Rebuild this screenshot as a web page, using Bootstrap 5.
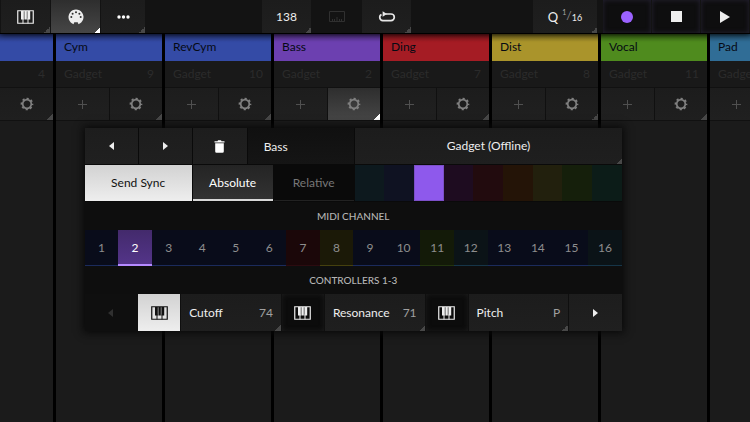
<!DOCTYPE html>
<html lang="en" data-bs-theme="dark">
<head>
<meta charset="utf-8">
<meta name="viewport" content="width=device-width, initial-scale=1">
<title>Mixer</title>
<link href="https://cdn.jsdelivr.net/npm/bootstrap@5.3.0/dist/css/bootstrap.min.css" rel="stylesheet">
<style>
:root { --fold: #484848; }
body { background: #000; color: #eee; font-family: "Lato", "Liberation Sans", sans-serif; font-size: 12px; line-height: 16px; }
.btn { --bs-btn-font-size: 12px; --bs-btn-line-height: 16px; --bs-btn-padding-x: 0; --bs-btn-padding-y: 0; --bs-btn-border-width: 0px; --bs-btn-border-radius: 0; --bs-btn-color: #eee; --bs-btn-hover-color: #fff; display: flex; align-items: center; justify-content: center; min-width: 0; }
.btn:disabled { opacity: 1; color: #303030; }
svg { display: block; flex: none; }

/* Surfaces */
.pad { background: linear-gradient(#1d1d1d, #202020); }
.fold { background: linear-gradient(135deg, transparent 50%, var(--fold) 50%) right bottom / 6px 6px no-repeat, linear-gradient(#1c1c1c, #1f1f1f); }
.fold.lit { --fold: #fff; background: linear-gradient(135deg, transparent 50%, var(--fold) 50%) right bottom / 6px 6px no-repeat, linear-gradient(#2e2e2e, #464646); }
.white-pad { background: linear-gradient(#d2d2d2, #eee); --bs-btn-color: #111; --bs-btn-hover-color: #000; }
.well { background: #0c0c0c; box-shadow: inset 0 0 5px #1c1c1c; }

/* Toolbar */
.toolbar { height: 33px; background: #131313; padding-left: 1px; padding-right: 1px; box-shadow: 0 1px 6px #000; }
.tools { gap: 1px; }
.tool { width: 49px; height: 100%; }
.tool-narrow { width: 44px; }
.tool-wide { width: 64px; }
.tempo { font-size: 12px; }
.middle { margin-right: 5px; }
.transport { margin-left: 6px; gap: 1px; }
.transport .btn { width: 48px; box-shadow: inset 0 0 5px #262232; background: #0e0e0f; }
.quant { font-size: 13px; }
.fraction { font-size: 9px; margin-left: 4px; }
.fraction sup { font-size: 7px; top: -5px; color: #aaa; }
.fraction span { color: #888; font-size: 12px; }
.fraction sub { font-size: 9px; bottom: -1px; }

/* Tracks */
.tracks { gap: 3px; margin-top: 1px; }
.track { width: 106px; background: linear-gradient(#181818, #1b1b1b 60px); }
.track.clipped { width: 53px; }
.track-name { height: 27px; padding: 5px 8px; color: #060a14; background: linear-gradient(rgba(0,0,0,.35), transparent 8px), var(--hue); }
.track-device { height: 27px; padding: 5px 8px; color: #2b2b2b; background: #191919; border-bottom: 1px solid #111; }
.track-keys { height: 33px; gap: 1px; border-bottom: 1px solid #111; background: #101010; }
.track-keys .btn { color: #808080; }
.track-keys .plus { color: #505050; }
.blue { --hue: #344ba6; } .violet { --hue: #6c40b0; } .red { --hue: #a51c24; } .gold { --hue: #aa942b; } .green { --hue: #4f8b1e; } .teal { --hue: #306d96; }

/* Device panel */
.panel { left: 11.3%; width: 71.6%; top: 128px; background: #0e0e0e; box-shadow: 0 0 8px 2px #090909; }
.line { height: 37px; display: grid; gap: 1px; background: #0a0a0a; }
.line-device { grid-template-columns: repeat(3, 10fr) 20fr 50fr; }
.line-sync { grid-template-columns: 20fr 15fr 15fr 50fr; padding-bottom: 1px; }
.line-channels { height: 36px; grid-template-columns: repeat(16, 1fr); gap: 0; }
.line-controls { grid-template-columns: 10fr repeat(3, 8fr 19fr) 10fr; background: #0f0f0f; }
.line-device > * { margin-bottom: 1px; }
.title-field { min-width: 0; border: 0; padding: 1px 16px 0; color: #eee; background: linear-gradient(#101010, #151515); border-radius: 0; font-size: 12px; }
.caption { height: 28px; font-size: 10px; line-height: 28px; color: #b4b4b4; text-align: center; margin: 0; }
.mode { color: #777; background: #0a0a0a; box-shadow: inset 0 -1px #222; }
.btn-check:checked + .mode { color: #fff; background: linear-gradient(#242424, #333); box-shadow: inset 0 -2px #d8d8d8; }
.swatches { display: grid; grid-template-columns: repeat(9, 1fr); }
.swatch { background: var(--dim); }
.btn-check:checked + .swatch { background: #8e59ec; box-shadow: inset 0 0 0 1px #7c50c8; }
.channel { color: #8e8e8e; background: var(--dim); box-shadow: inset 0 -1px var(--edge); }
.btn-check:checked + .channel { color: #fff; background: linear-gradient(#432a6c, #54358a); box-shadow: inset 0 -2px #b58aff; }
.c-blue { --dim: #090c1a; --edge: #1b2b5c; } .c-red { --dim: #1b0709; --edge: #2c0b10; } .c-olive { --dim: #1b1907; --edge: #45400e; } .c-green { --dim: #131a08; --edge: #22340f; } .c-cyan { --dim: #0b1317; --edge: #163548; }
.s-cyan { --dim: #0d191e; } .s-navy { --dim: #0f1222; } .s-violet { --dim: #8e59ec; } .s-plum { --dim: #1e0c20; } .s-red { --dim: #220b0e; } .s-brown { --dim: #241407; } .s-olive { --dim: #22200d; } .s-green { --dim: #151f0b; } .s-teal { --dim: #0c1c18; }
.control { justify-content: space-between; padding: 0 8px; }
.control .amount { color: #a0a0a0; }
</style>
</head>
<body class="vh-100 d-flex flex-column overflow-hidden position-relative">
<svg width="0" height="0" class="position-absolute" aria-hidden="true">
  <symbol id="keys" viewBox="0 0 17 14"><path d="M.75.75h15.5v12.5H.75z" fill="none" stroke="currentColor" stroke-width="1.2"/><path d="M6 8.5v5M11 8.5v5" stroke="currentColor" stroke-width="1"/><path d="M4 1h2.8v8.5H4zM7.4 1h2.4v8.5H7.4zM10.4 1h2.8v8.5h-2.8z" fill="currentColor"/></symbol>
  <symbol id="gear" viewBox="-7 -7 14 14"><circle r="4.3" fill="none" stroke="currentColor" stroke-width="1.7"/><circle r="5.5" fill="none" stroke="currentColor" stroke-width="1.7" stroke-dasharray="2.16 2.16" stroke-dashoffset="1.08"/></symbol>
  <symbol id="left" viewBox="0 0 5 8"><path d="M5 0v8L0 4z" fill="currentColor"/></symbol>
  <symbol id="right" viewBox="0 0 5 8"><path d="M0 0v8l5-4z" fill="currentColor"/></symbol>
  <symbol id="plus" viewBox="0 0 9 9"><path d="M4.5 0v9M0 4.5h9" stroke="currentColor"/></symbol>
</svg>

<header class="toolbar d-flex flex-shrink-0 justify-content-between position-relative z-1">
  <div class="tools d-flex">
    <button class="btn tool fold" aria-label="Keyboard"><svg width="17" height="14"><use href="#keys"/></svg></button>
    <button class="btn tool fold lit" aria-label="MIDI" aria-pressed="true">
      <svg width="16" height="16" viewBox="0 0 16 16"><path d="M5.8 15.2A7.5 7.5 0 1 1 10.200 15.200V14.300Q10.200 13.300 9.200 13.300H6.800Q5.800 13.300 5.800 14.300Z" fill="#eee"/><g fill="#333"><circle cx="3.300" cy="8" r="1"/><circle cx="4.600" cy="4.700" r="1"/><circle cx="8" cy="3.300" r="1"/><circle cx="11.400" cy="4.700" r="1"/><circle cx="12.700" cy="8" r="1"/></g></svg>
    </button>
    <button class="btn tool tool-narrow fold" aria-label="More"><svg width="13" height="4" viewBox="0 0 13 4" fill="#fff"><circle cx="2" cy="2" r="1.700"/><circle cx="6.500" cy="2" r="1.700"/><circle cx="11" cy="2" r="1.700"/></svg></button>
  </div>
  <div class="middle tools d-flex">
    <button class="btn tool fold tempo">138</button>
    <button class="btn tool" disabled aria-label="Ruler"><svg width="16" height="11" viewBox="0 0 16 11" fill="none" stroke="currentColor"><path d="M.5.5h15v10H.5zM3.500 10V8M5.500 10V8M8 10V6M10.500 10V8M12.500 10V8"/></svg></button>
    <button class="btn tool fold" aria-label="Loop"><svg width="18" height="11" viewBox="0 0 18 11"><path d="M7.500 3H13a3.300 3.300 0 0 1 0 6.600H4.800a3.300 3.300 0 0 1-1.300-6.200" fill="none" stroke="#e8e8e8" stroke-width="1.700"/><path d="M4.600.2L9 3 4.600 5.800z" fill="#e8e8e8"/></svg></button>
  </div>
  <div class="d-flex">
    <button class="btn tool tool-wide fold quant">Q<span class="fraction"><sup>1</sup><span>/</span><sub>16</sub></span></button>
    <div class="transport d-flex">
      <button class="btn" aria-label="Record"><svg width="12" height="12"><circle cx="6" cy="6" r="6" fill="#9b62ff"/></svg></button>
      <button class="btn" aria-label="Stop"><svg width="11" height="11"><path d="M0 0h11v11H0z" fill="#eee"/></svg></button>
      <button class="btn" aria-label="Play"><svg width="10" height="12"><path d="M0 0v12l10-6z" fill="#eee"/></svg></button>
    </div>
  </div>
</header>

<main class="tracks d-flex flex-grow-1 overflow-hidden">
  <section class="track clipped blue flex-shrink-0">
    <div class="track-name"></div><div class="track-device d-flex justify-content-end">4</div>
    <div class="track-keys d-flex"><button class="btn flex-fill fold" aria-label="Settings"><svg width="14" height="14"><use href="#gear"/></svg></button></div>
  </section>
  <section class="track blue flex-shrink-0">
    <div class="track-name">Cym</div><div class="track-device d-flex justify-content-between"><span>Gadget</span><span>9</span></div>
    <div class="track-keys d-flex"><button class="btn w-50 pad plus" aria-label="Add"><svg width="9" height="9"><use href="#plus"/></svg></button><button class="btn w-50 fold" aria-label="Settings"><svg width="14" height="14"><use href="#gear"/></svg></button></div>
  </section>
  <section class="track blue flex-shrink-0">
    <div class="track-name">RevCym</div><div class="track-device d-flex justify-content-between"><span>Gadget</span><span>10</span></div>
    <div class="track-keys d-flex"><button class="btn w-50 pad plus" aria-label="Add"><svg width="9" height="9"><use href="#plus"/></svg></button><button class="btn w-50 fold" aria-label="Settings"><svg width="14" height="14"><use href="#gear"/></svg></button></div>
  </section>
  <section class="track violet flex-shrink-0">
    <div class="track-name">Bass</div><div class="track-device d-flex justify-content-between"><span>Gadget</span><span>2</span></div>
    <div class="track-keys d-flex"><button class="btn w-50 pad plus" aria-label="Add"><svg width="9" height="9"><use href="#plus"/></svg></button><button class="btn w-50 fold lit" aria-label="Settings" aria-pressed="true"><svg width="14" height="14"><use href="#gear"/></svg></button></div>
  </section>
  <section class="track red flex-shrink-0">
    <div class="track-name">Ding</div><div class="track-device d-flex justify-content-between"><span>Gadget</span><span>7</span></div>
    <div class="track-keys d-flex"><button class="btn w-50 pad plus" aria-label="Add"><svg width="9" height="9"><use href="#plus"/></svg></button><button class="btn w-50 fold" aria-label="Settings"><svg width="14" height="14"><use href="#gear"/></svg></button></div>
  </section>
  <section class="track gold flex-shrink-0">
    <div class="track-name">Dist</div><div class="track-device d-flex justify-content-between"><span>Gadget</span><span>8</span></div>
    <div class="track-keys d-flex"><button class="btn w-50 pad plus" aria-label="Add"><svg width="9" height="9"><use href="#plus"/></svg></button><button class="btn w-50 fold" aria-label="Settings"><svg width="14" height="14"><use href="#gear"/></svg></button></div>
  </section>
  <section class="track green flex-shrink-0">
    <div class="track-name">Vocal</div><div class="track-device d-flex justify-content-between"><span>Gadget</span><span>11</span></div>
    <div class="track-keys d-flex"><button class="btn w-50 pad plus" aria-label="Add"><svg width="9" height="9"><use href="#plus"/></svg></button><button class="btn w-50 fold" aria-label="Settings"><svg width="14" height="14"><use href="#gear"/></svg></button></div>
  </section>
  <section class="track teal flex-shrink-0">
    <div class="track-name">Pad</div><div class="track-device">Gadget</div>
    <div class="track-keys d-flex"><button class="btn w-50 pad plus" aria-label="Add"><svg width="9" height="9"><use href="#plus"/></svg></button><button class="btn w-50 fold" aria-label="Settings"><svg width="14" height="14"><use href="#gear"/></svg></button></div>
  </section>
</main>

<form class="panel position-absolute z-2">
  <div class="line line-device">
    <button type="button" class="btn pad" aria-label="Previous track"><svg width="5" height="8"><use href="#left"/></svg></button>
    <button type="button" class="btn pad" aria-label="Next track"><svg width="5" height="8"><use href="#right"/></svg></button>
    <button type="button" class="btn pad" aria-label="Delete"><svg width="11" height="13" viewBox="0 0 11 13"><path d="M.5 1.200h3L4 .3h3l.5.900h3v1.300H.5zM1.200 3.300h8.600V11.500q0 1.300-1.300 1.300H2.500Q1.200 12.800 1.200 11.500z" fill="#fff"/></svg></button>
    <input class="title-field" type="text" value="Bass" aria-label="Track name">
    <button type="button" class="btn fold">Gadget (Offline)</button>
  </div>
  <div class="line line-sync">
    <button type="button" class="btn white-pad" aria-pressed="true">Send Sync</button>
    <input class="btn-check" type="radio" name="mode" id="abs" checked><label class="btn mode" for="abs">Absolute</label>
    <input class="btn-check" type="radio" name="mode" id="rel"><label class="btn mode" for="rel">Relative</label>
    <div class="swatches">
      <input class="btn-check" type="radio" name="hue" id="h1"><label class="btn swatch s-cyan" for="h1" aria-label="Cyan"></label>
      <input class="btn-check" type="radio" name="hue" id="h2"><label class="btn swatch s-navy" for="h2" aria-label="Blue"></label>
      <input class="btn-check" type="radio" name="hue" id="h3" checked><label class="btn swatch s-violet" for="h3" aria-label="Violet"></label>
      <input class="btn-check" type="radio" name="hue" id="h4"><label class="btn swatch s-plum" for="h4" aria-label="Plum"></label>
      <input class="btn-check" type="radio" name="hue" id="h5"><label class="btn swatch s-red" for="h5" aria-label="Red"></label>
      <input class="btn-check" type="radio" name="hue" id="h6"><label class="btn swatch s-brown" for="h6" aria-label="Orange"></label>
      <input class="btn-check" type="radio" name="hue" id="h7"><label class="btn swatch s-olive" for="h7" aria-label="Yellow"></label>
      <input class="btn-check" type="radio" name="hue" id="h8"><label class="btn swatch s-green" for="h8" aria-label="Green"></label>
      <input class="btn-check" type="radio" name="hue" id="h9"><label class="btn swatch s-teal" for="h9" aria-label="Teal"></label>
    </div>
  </div>
  <h2 class="caption">MIDI CHANNEL</h2>
  <div class="line line-channels">
    <input class="btn-check" type="radio" name="ch" id="c1"><label class="btn channel c-blue" for="c1">1</label>
    <input class="btn-check" type="radio" name="ch" id="c2" checked><label class="btn channel" for="c2">2</label>
    <input class="btn-check" type="radio" name="ch" id="c3"><label class="btn channel c-blue" for="c3">3</label>
    <input class="btn-check" type="radio" name="ch" id="c4"><label class="btn channel c-blue" for="c4">4</label>
    <input class="btn-check" type="radio" name="ch" id="c5"><label class="btn channel c-blue" for="c5">5</label>
    <input class="btn-check" type="radio" name="ch" id="c6"><label class="btn channel c-blue" for="c6">6</label>
    <input class="btn-check" type="radio" name="ch" id="c7"><label class="btn channel c-red" for="c7">7</label>
    <input class="btn-check" type="radio" name="ch" id="c8"><label class="btn channel c-olive" for="c8">8</label>
    <input class="btn-check" type="radio" name="ch" id="c9"><label class="btn channel c-blue" for="c9">9</label>
    <input class="btn-check" type="radio" name="ch" id="c10"><label class="btn channel c-blue" for="c10">10</label>
    <input class="btn-check" type="radio" name="ch" id="c11"><label class="btn channel c-green" for="c11">11</label>
    <input class="btn-check" type="radio" name="ch" id="c12"><label class="btn channel c-cyan" for="c12">12</label>
    <input class="btn-check" type="radio" name="ch" id="c13"><label class="btn channel c-blue" for="c13">13</label>
    <input class="btn-check" type="radio" name="ch" id="c14"><label class="btn channel c-blue" for="c14">14</label>
    <input class="btn-check" type="radio" name="ch" id="c15"><label class="btn channel c-blue" for="c15">15</label>
    <input class="btn-check" type="radio" name="ch" id="c16"><label class="btn channel c-cyan" for="c16">16</label>
  </div>
  <h2 class="caption">CONTROLLERS 1-3</h2>
  <div class="line line-controls">
    <button type="button" class="btn" disabled aria-label="Previous controllers"><svg width="5" height="8"><use href="#left"/></svg></button>
    <button type="button" class="btn white-pad" aria-label="Keys for Cutoff" aria-pressed="true"><svg width="17" height="14"><use href="#keys"/></svg></button>
    <button type="button" class="btn fold control"><span>Cutoff</span><span class="amount">74</span></button>
    <button type="button" class="btn well" aria-label="Keys for Resonance"><svg width="17" height="14"><use href="#keys"/></svg></button>
    <button type="button" class="btn fold control"><span>Resonance</span><span class="amount">71</span></button>
    <button type="button" class="btn well" aria-label="Keys for Pitch"><svg width="17" height="14"><use href="#keys"/></svg></button>
    <button type="button" class="btn fold control"><span>Pitch</span><span class="amount">P</span></button>
    <button type="button" class="btn pad" aria-label="Next controllers"><svg width="5" height="8"><use href="#right"/></svg></button>
  </div>
</form>
<script src="https://cdn.jsdelivr.net/npm/bootstrap@5.3.0/dist/js/bootstrap.bundle.min.js"></script>
</body>
</html>
